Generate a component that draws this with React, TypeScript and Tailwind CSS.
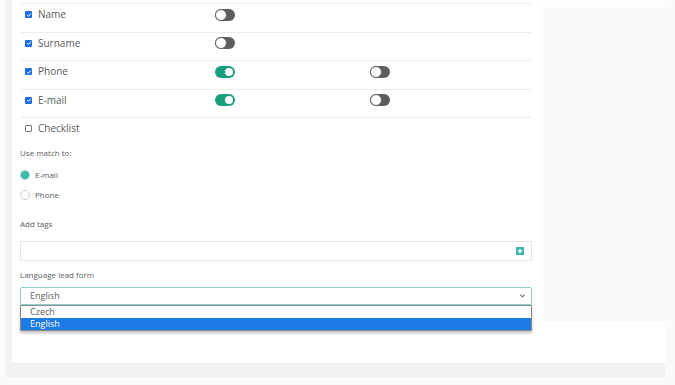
import React from 'react'

const font = { fontFamily: '"Open Sans", "Liberation Sans", sans-serif' }

function Check({ on }: { on: boolean }) {
  return on ? (
    <span className="flex h-[7px] w-[7px] items-center justify-center rounded-[1px] bg-[#1f6fe0]">
      <svg viewBox="0 0 8 8" className="h-[6px] w-[6px]">
        <path d="M1.5 4.2 3.2 5.8 6.5 2.2" fill="none" stroke="#fff" strokeWidth="1.3" />
      </svg>
    </span>
  ) : (
    <span className="h-[7px] w-[7px] rounded-[1px] border border-[#777] bg-white" />
  )
}

function Toggle({ on }: { on: boolean }) {
  return on ? (
    <span className="relative flex h-[12px] w-[20px] items-center rounded-full bg-[#18a07e]">
      <span className="absolute right-[2px] h-[8px] w-[8px] rounded-full bg-white" />
    </span>
  ) : (
    <span className="relative flex h-[12px] w-[20px] items-center rounded-full bg-[#5e5e5e]">
      <span className="absolute left-0 h-[12px] w-[12px] rounded-full border border-[#5e5e5e] bg-white" />
    </span>
  )
}

const rows = [
  { label: 'Name', checked: true, a: false as boolean | null, b: null as boolean | null },
  { label: 'Surname', checked: true, a: false, b: null },
  { label: 'Phone', checked: true, a: true, b: false },
  { label: 'E-mail', checked: true, a: true, b: false },
]

export default function App() {
  return (
    <div className="h-[385px] w-[675px] overflow-hidden bg-[#f9fafc] text-[#5a5a5a]" style={font}>
      <div className="ml-[6px] h-[377px] w-[659px] bg-[#f2f2f5]">
        <div className="ml-[6px] flex h-[363px] w-[653px] bg-white">
          <div className="w-[528px] px-[8px] pt-[3px]">
            {rows.map((r) => (
              <div key={r.label} className="flex h-[28.5px] items-center border-t border-[#ececec] pb-[6px]">
                <div className="flex w-[195px] items-center gap-[6px] pl-[5px]">
                  <Check on={r.checked} />
                  <span className="text-[10px]">{r.label}</span>
                </div>
                <div className="flex w-[155px]">{r.a !== null && <Toggle on={r.a} />}</div>
                <div className="flex">{r.b !== null && <Toggle on={r.b} />}</div>
              </div>
            ))}
            <div className="flex h-[28.5px] items-center gap-[6px] border-t border-[#ececec] pb-[6px] pl-[5px]">
              <Check on={false} />
              <span className="text-[10px]">Checklist</span>
            </div>

            <div className="mt-[1px] text-[8px] leading-[12px]">Use match to:</div>
            <div className="mt-[10px] flex h-[12px] items-center gap-[5px]">
              <span className="flex h-[10px] w-[10px] items-center justify-center rounded-full border border-[#9edbd3] bg-[#3dbcae]" />
              <span className="text-[8px]">E-mail</span>
            </div>
            <div className="mt-[8px] flex h-[12px] items-center gap-[5px]">
              <span className="h-[10px] w-[10px] rounded-full border border-[#cfcfcf] bg-white" />
              <span className="text-[8px]">Phone</span>
            </div>

            <div className="mt-[17px] text-[8px] leading-[12px]">Add tags</div>
            <div className="mt-[11px] flex h-[20px] items-center justify-end border border-[#e3e3e3] pr-[7px]">
              <span className="flex h-[8px] w-[8px] items-center justify-center rounded-[1px] bg-[#38b2b4]">
                <svg viewBox="0 0 8 8" className="h-[8px] w-[8px]">
                  <path d="M4 1.8v4.4M1.8 4h4.4" stroke="#fff" strokeWidth="1.3" />
                </svg>
              </span>
            </div>

            <div className="mt-[8px] text-[8px] leading-[12px]">Language lead form</div>
            <div className="relative mt-[6px]">
              <div className="flex h-[18px] items-center justify-between rounded-[2px] border border-[#93d0d0] pl-[9px] pr-[5px]">
                <span className="text-[9px]">English</span>
                <svg viewBox="0 0 8 8" className="h-[7px] w-[7px]">
                  <path d="M1.5 3 4 5.5 6.5 3" fill="none" stroke="#666" strokeWidth="1.2" />
                </svg>
              </div>
              <div className="border border-[#8d8d8d] bg-white shadow-[0_2px_3px_rgba(0,0,0,0.25)]">
                <div className="h-[12px] pl-[9px] text-[9px] leading-[12px]">Czech</div>
                <div className="h-[12px] bg-[#1e7be6] pl-[9px] text-[9px] leading-[12px] text-white">English</div>
              </div>
            </div>
          </div>
          <div className="mt-[7px] h-[315px] w-[125px] bg-[#fafafa]" />
        </div>
      </div>
    </div>
  )
}
